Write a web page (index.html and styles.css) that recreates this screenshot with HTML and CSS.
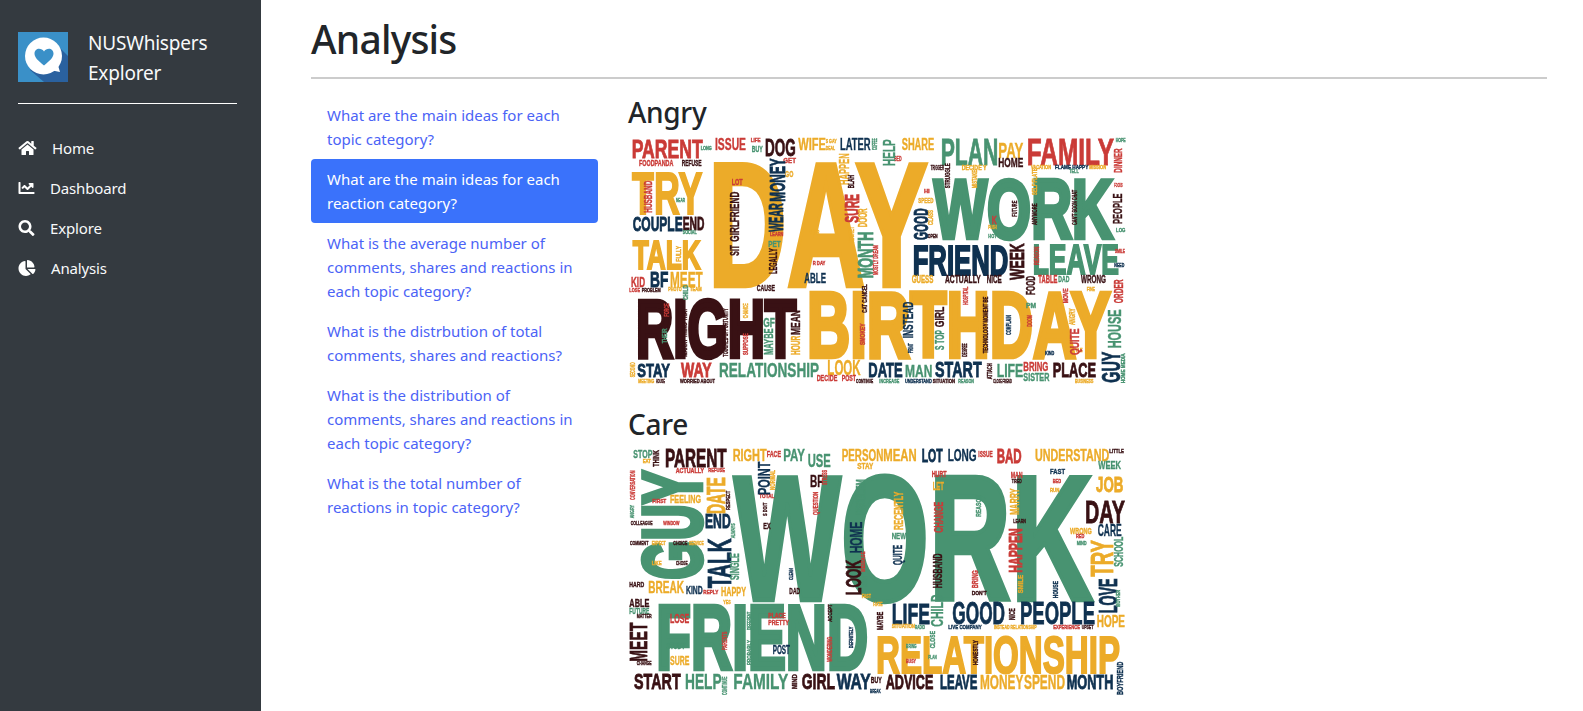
FILE: index.html
```html
<!DOCTYPE html>
<html lang="en">
<head>
<meta charset="utf-8">
<title>NUSWhispers Explorer</title>
<link rel="stylesheet" href="styles.css">
</head>
<body>
<div class="app">
<aside class="sidebar">
  <div class="brand">
    <svg class="logo" viewBox="0 0 50 50">
      <rect width="50" height="50" fill="#3a90c8"/>
      <path d="M12 38L26 50H50V24L38 12z" fill="#2a619f"/>
      <circle cx="25.500" cy="24" r="18.500" fill="#fff"/>
      <path d="M32 38L42 40L39 30z" fill="#fff"/>
      <path d="M26 33.500C20 28.500 16.500 25.500 16.500 21.500C16.500 18.500 18.800 16.800 21 16.800C23 16.800 25 17.800 26 19.600C27 17.800 29 16.800 31 16.800C33.200 16.800 35.500 18.500 35.500 21.500C35.500 25.500 32 28.500 26 33.500z" fill="#3a90c8"/>
    </svg>
    <div class="brand-name">NUSWhispers Explorer</div>
  </div>
  <nav class="side-nav">
    <a class="side-link"><svg class="ico ico-home" viewBox="0 0 576 512"><path d="M280.37 148.26L96 300.11V464a16 16 0 0 0 16 16l112.06-.29a16 16 0 0 0 15.92-16V368a16 16 0 0 1 16-16h64a16 16 0 0 1 16 16v95.64a16 16 0 0 0 16 16.05L464 480a16 16 0 0 0 16-16V300L295.67 148.26a12.19 12.19 0 0 0-15.3 0zM571.6 251.47L488 182.56V44.05a12 12 0 0 0-12-12h-56a12 12 0 0 0-12 12v72.61L318.47 43a48 48 0 0 0-61 0L4.34 251.47a12 12 0 0 0-1.6 16.9l25.5 31A12 12 0 0 0 45.15 301l235.22-193.74a12.19 12.19 0 0 1 15.3 0L530.9 301a12 12 0 0 0 16.9-1.6l25.5-31a12 12 0 0 0-1.7-16.93z"/></svg>Home</a>
    <a class="side-link"><svg class="ico" viewBox="0 0 512 512"><path d="M496 384H64V80c0-8.840-7.160-16-16-16H16C7.160 64 0 71.160 0 80v336c0 17.670 14.330 32 32 32h464c8.840 0 16-7.160 16-16v-32c0-8.840-7.160-16-16-16zM464 96H345.940c-21.380 0-32.090 25.850-16.970 40.970l32.400 32.400L288 242.750l-73.370-73.370c-12.500-12.500-32.760-12.500-45.250 0l-68.690 68.690c-6.250 6.250-6.250 16.380 0 22.630l22.620 22.620c6.250 6.250 16.380 6.250 22.630 0L192 237.250l73.370 73.370c12.500 12.500 32.760 12.500 45.250 0l96-96 32.400 32.400c15.120 15.120 40.970 4.410 40.970-16.970V112c0-8.840-7.160-16-16-16z"/></svg>Dashboard</a>
    <a class="side-link"><svg class="ico" viewBox="0 0 512 512"><path d="M505 442.700L405.300 343c-4.500-4.500-10.600-7-17-7H372c27.600-35.300 44-79.700 44-128C416 93.100 322.900 0 208 0S0 93.100 0 208s93.100 208 208 208c48.300 0 92.700-16.400 128-44v16.300c0 6.400 2.500 12.500 7 17l99.700 99.700c9.400 9.400 24.600 9.400 33.900 0l28.300-28.300c9.400-9.400 9.400-24.600.1-34zM208 336c-70.700 0-128-57.200-128-128 0-70.700 57.200-128 128-128 70.700 0 128 57.200 128 128 0 70.700-57.200 128-128 128z"/></svg>Explore</a>
    <a class="side-link"><svg class="ico ico-pie" viewBox="0 0 544 512"><path d="M527.790 288H290.500l158.030 158.030c6.040 6.040 15.980 6.530 22.190.68 38.700-36.460 65.320-85.610 73.130-140.860 1.340-9.460-6.510-17.850-16.060-17.850zm-15.830-64.800C503.720 103.740 408.260 8.280 288.800.04 279.680-.59 272 7.100 272 16.240V240h223.770c9.140 0 16.820-7.680 16.190-16.800zM224 288V50.710c0-9.550-8.390-17.400-17.840-16.060C86.990 51.490-4.100 155.600.14 280.370 4.500 408.510 114.830 513.590 243.030 511.980c50.400-.63 96.970-16.870 135.260-44.030 7.900-5.600 8.420-17.230 1.570-24.080L224 288z"/></svg>Analysis</a>
  </nav>
</aside>
<main class="main">
  <h1 class="title">Analysis</h1>
  <div class="columns">
    <nav class="pills">
      <a class="pill">What are the main ideas for each topic category?</a>
      <a class="pill active">What are the main ideas for each reaction category?</a>
      <a class="pill">What is the average number of comments, shares and reactions in each topic category?</a>
      <a class="pill">What is the distrbution of total comments, shares and reactions?</a>
      <a class="pill">What is the distribution of comments, shares and reactions in each topic category?</a>
      <a class="pill">What is the total number of reactions in topic category?</a>
    </nav>
    <section class="clouds">
      <h3 class="cloud-title">Angry</h3>
      <svg class="cloud" viewBox="24 135 1500 750">
        <text class="y t1" x="264" y="589" font-size="530" textLength="660" lengthAdjust="spacingAndGlyphs">DAY</text>
        <text class="g t1" x="941" y="444" font-size="252" textLength="538" lengthAdjust="spacingAndGlyphs">WORK</text>
        <text class="y t1" x="561" y="802" font-size="277" textLength="911" lengthAdjust="spacingAndGlyphs">BIRTHDAY</text>
        <text class="m t1" x="48" y="802" font-size="245" textLength="481" lengthAdjust="spacingAndGlyphs">RIGHT</text>
        <text class="y t2" x="36" y="372" font-size="176" textLength="211" lengthAdjust="spacingAndGlyphs">TRY</text>
        <text class="y t2" x="38" y="537" font-size="122" textLength="204" lengthAdjust="spacingAndGlyphs">TALK</text>
        <text class="n t2" x="878" y="555" font-size="128" textLength="287" lengthAdjust="spacingAndGlyphs">FRIEND</text>
        <text class="g t2" x="1238" y="552" font-size="129" textLength="259" lengthAdjust="spacingAndGlyphs">LEAVE</text>
        <text class="r t3" x="35" y="205" font-size="78" textLength="213" lengthAdjust="spacingAndGlyphs">PARENT</text>
        <text class="r" x="285" y="180" font-size="52" textLength="93" lengthAdjust="spacingAndGlyphs">ISSUE</text>
        <text class="m t3" x="435" y="197" font-size="73" textLength="92" lengthAdjust="spacingAndGlyphs">DOG</text>
        <text class="y" x="535" y="180" font-size="52" textLength="83" lengthAdjust="spacingAndGlyphs">WIFE</text>
        <text class="n" x="660" y="180" font-size="52" textLength="92" lengthAdjust="spacingAndGlyphs">LATER</text>
        <text class="y" x="845" y="180" font-size="52" textLength="98" lengthAdjust="spacingAndGlyphs">SHARE</text>
        <text class="g t3" x="962" y="225" font-size="112" textLength="173" lengthAdjust="spacingAndGlyphs">PLAN</text>
        <text class="y" x="1135" y="205" font-size="68" textLength="75" lengthAdjust="spacingAndGlyphs">PAY</text>
        <text class="r t3" x="1220" y="225" font-size="112" textLength="262" lengthAdjust="spacingAndGlyphs">FAMILY</text>
        <text class="m" x="1135" y="232" font-size="39" textLength="75" lengthAdjust="spacingAndGlyphs">HOME</text>
        <text class="n t3" x="38" y="423" font-size="59" textLength="150" lengthAdjust="spacingAndGlyphs">COUPLE</text>
        <text class="m t3" x="188" y="420" font-size="55" textLength="65" lengthAdjust="spacingAndGlyphs">END</text>
        <text class="n t3" x="90" y="592" font-size="64" textLength="55" lengthAdjust="spacingAndGlyphs">BF</text>
        <text class="y" x="150" y="592" font-size="64" textLength="98" lengthAdjust="spacingAndGlyphs">MEET</text>
        <text class="r" x="33" y="592" font-size="44" textLength="42" lengthAdjust="spacingAndGlyphs">KID</text>
        <text class="n" x="553" y="578" font-size="45" textLength="65" lengthAdjust="spacingAndGlyphs">ABLE</text>
        <text class="g" x="445" y="472" font-size="27" textLength="37" lengthAdjust="spacingAndGlyphs">PET</text>
        <text class="m" x="410" y="603" font-size="25" textLength="55" lengthAdjust="spacingAndGlyphs">CAUSE</text>
        <text class="r" x="335" y="285" font-size="27" textLength="33" lengthAdjust="spacingAndGlyphs">LOT</text>
        <text class="y" x="875" y="580" font-size="30" textLength="65" lengthAdjust="spacingAndGlyphs">GUESS</text>
        <text class="m" x="975" y="580" font-size="30" textLength="107" lengthAdjust="spacingAndGlyphs">ACTUALLY</text>
        <text class="m" x="1100" y="580" font-size="30" textLength="45" lengthAdjust="spacingAndGlyphs">NICE</text>
        <text class="r" x="1255" y="580" font-size="30" textLength="57" lengthAdjust="spacingAndGlyphs">TABLE</text>
        <text class="g" x="1315" y="576" font-size="25" textLength="33" lengthAdjust="spacingAndGlyphs">DAD</text>
        <text class="m" x="1383" y="580" font-size="30" textLength="75" lengthAdjust="spacingAndGlyphs">WRONG</text>
        <text class="n t3" x="52" y="860" font-size="57" textLength="98" lengthAdjust="spacingAndGlyphs">STAY</text>
        <text class="r t3" x="183" y="860" font-size="61" textLength="92" lengthAdjust="spacingAndGlyphs">WAY</text>
        <text class="g" x="297" y="862" font-size="60" textLength="300" lengthAdjust="spacingAndGlyphs">RELATIONSHIP</text>
        <text class="y" x="622" y="855" font-size="68" textLength="100" lengthAdjust="spacingAndGlyphs">LOOK</text>
        <text class="n t3" x="745" y="860" font-size="61" textLength="103" lengthAdjust="spacingAndGlyphs">DATE</text>
        <text class="g" x="855" y="860" font-size="52" textLength="82" lengthAdjust="spacingAndGlyphs">MAN</text>
        <text class="n t3" x="945" y="860" font-size="65" textLength="140" lengthAdjust="spacingAndGlyphs">START</text>
        <text class="g" x="1130" y="860" font-size="57" textLength="80" lengthAdjust="spacingAndGlyphs">LIFE</text>
        <text class="r" x="1210" y="842" font-size="37" textLength="75" lengthAdjust="spacingAndGlyphs">BRING</text>
        <text class="g" x="1210" y="872" font-size="33" textLength="78" lengthAdjust="spacingAndGlyphs">SISTER</text>
        <text class="m t3" x="1298" y="860" font-size="61" textLength="130" lengthAdjust="spacingAndGlyphs">PLACE</text>
        <text class="r" x="590" y="873" font-size="25" textLength="62" lengthAdjust="spacingAndGlyphs">DECIDE</text>
        <text class="r" x="665" y="873" font-size="25" textLength="43" lengthAdjust="spacingAndGlyphs">POST</text>
        <text class="r" x="57" y="228" font-size="25" textLength="103" lengthAdjust="spacingAndGlyphs">FOODPANDA</text>
        <text class="m" x="185" y="228" font-size="25" textLength="60" lengthAdjust="spacingAndGlyphs">REFUSE</text>
        <text class="g" x="395" y="187" font-size="27" textLength="33" lengthAdjust="spacingAndGlyphs">BUY</text>
        <text class="r" x="392" y="155" font-size="17" textLength="30" lengthAdjust="spacingAndGlyphs">LIFE</text>
        <text class="y" x="617" y="158" font-size="18" textLength="33" lengthAdjust="spacingAndGlyphs">S GAY</text>
        <text class="y" x="617" y="180" font-size="17" textLength="28" lengthAdjust="spacingAndGlyphs">DEAL</text>
        <text class="r" x="822" y="212" font-size="20" textLength="23" lengthAdjust="spacingAndGlyphs">BED</text>
        <text class="g" x="1487" y="155" font-size="17" textLength="30" lengthAdjust="spacingAndGlyphs">HOPE</text>
        <text class="g" x="242" y="180" font-size="14" textLength="33" lengthAdjust="spacingAndGlyphs">LONG</text>
        <text class="g" x="168" y="335" font-size="17" textLength="27" lengthAdjust="spacingAndGlyphs">NEAR</text>
        <text class="g" x="188" y="432" font-size="17" textLength="42" lengthAdjust="spacingAndGlyphs">SOCIAL</text>
        <text class="r" x="490" y="220" font-size="21" textLength="38" lengthAdjust="spacingAndGlyphs">GET</text>
        <text class="y" x="495" y="260" font-size="27" textLength="25" lengthAdjust="spacingAndGlyphs">GO</text>
        <text class="r" x="28" y="605" font-size="18" textLength="32" lengthAdjust="spacingAndGlyphs">LOSE</text>
        <text class="m" x="65" y="605" font-size="18" textLength="57" lengthAdjust="spacingAndGlyphs">PROBLEM</text>
        <text class="y" x="145" y="603" font-size="17" textLength="40" lengthAdjust="spacingAndGlyphs">PHOTO</text>
        <text class="y" x="210" y="603" font-size="17" textLength="35" lengthAdjust="spacingAndGlyphs">TEAM</text>
        <text class="y" x="1400" y="603" font-size="18" textLength="25" lengthAdjust="spacingAndGlyphs">FINE</text>
        <text class="g" x="430" y="710" font-size="37" textLength="35" lengthAdjust="spacingAndGlyphs">GF</text>
        <text class="y" x="55" y="878" font-size="17" textLength="48" lengthAdjust="spacingAndGlyphs">MEETING</text>
        <text class="m" x="108" y="878" font-size="17" textLength="27" lengthAdjust="spacingAndGlyphs">HOUSE</text>
        <text class="m" x="180" y="878" font-size="17" textLength="105" lengthAdjust="spacingAndGlyphs">WORRIED ABOUT</text>
        <text class="m" x="708" y="878" font-size="17" textLength="52" lengthAdjust="spacingAndGlyphs">CONTINUE</text>
        <text class="g" x="778" y="878" font-size="17" textLength="60" lengthAdjust="spacingAndGlyphs">INCREASE</text>
        <text class="n" x="855" y="878" font-size="17" textLength="80" lengthAdjust="spacingAndGlyphs">UNDERSTAND</text>
        <text class="m" x="938" y="878" font-size="17" textLength="67" lengthAdjust="spacingAndGlyphs">SITUATION</text>
        <text class="g" x="1015" y="878" font-size="17" textLength="47" lengthAdjust="spacingAndGlyphs">REASON</text>
        <text class="m" x="1120" y="878" font-size="17" textLength="55" lengthAdjust="spacingAndGlyphs">CLOSE FRIEND</text>
        <text class="y" x="1365" y="878" font-size="17" textLength="55" lengthAdjust="spacingAndGlyphs">BUSINESS</text>
        <text class="m" x="932" y="240" font-size="20" textLength="40" lengthAdjust="spacingAndGlyphs">TRIGGER</text>
        <text class="y" x="1025" y="240" font-size="20" textLength="75" lengthAdjust="spacingAndGlyphs">DECIDE Y</text>
        <text class="y" x="1233" y="238" font-size="17" textLength="60" lengthAdjust="spacingAndGlyphs">VACATION</text>
        <text class="n" x="1305" y="238" font-size="17" textLength="100" lengthAdjust="spacingAndGlyphs">FLAME HAPPY</text>
        <text class="y" x="1408" y="238" font-size="17" textLength="50" lengthAdjust="spacingAndGlyphs">MISSION</text>
        <text class="y" x="895" y="340" font-size="20" textLength="45" lengthAdjust="spacingAndGlyphs">SPEED</text>
        <text class="r" x="912" y="308" font-size="17" textLength="17" lengthAdjust="spacingAndGlyphs">HI</text>
        <text class="m" x="923" y="443" font-size="17" textLength="30" lengthAdjust="spacingAndGlyphs">OPEN</text>
        <text class="r" x="1115" y="403" font-size="33" textLength="15" lengthAdjust="spacingAndGlyphs">K</text>
        <text class="y" x="1105" y="418" font-size="17" textLength="25" lengthAdjust="spacingAndGlyphs">PUSH</text>
        <text class="g" x="1105" y="443" font-size="17" textLength="25" lengthAdjust="spacingAndGlyphs">HOT</text>
        <text class="y" x="568" y="432" font-size="17" textLength="30" lengthAdjust="spacingAndGlyphs">YEAR</text>
        <text class="r" x="578" y="526" font-size="17" textLength="38" lengthAdjust="spacingAndGlyphs">R DAY</text>
        <text class="r" x="450" y="438" font-size="17" textLength="40" lengthAdjust="spacingAndGlyphs">LEARN</text>
        <text class="g" x="1218" y="655" font-size="21" textLength="30" lengthAdjust="spacingAndGlyphs">PM</text>
        <text class="y" x="1350" y="785" font-size="17" textLength="38" lengthAdjust="spacingAndGlyphs">STYLE</text>
        <text class="n" x="1275" y="795" font-size="17" textLength="28" lengthAdjust="spacingAndGlyphs">KIND</text>
        <text class="r" x="1485" y="490" font-size="17" textLength="30" lengthAdjust="spacingAndGlyphs">SMILE</text>
        <text class="n" x="1483" y="530" font-size="17" textLength="30" lengthAdjust="spacingAndGlyphs">NEED</text>
        <text class="r" x="1483" y="290" font-size="17" textLength="25" lengthAdjust="spacingAndGlyphs">FOCUS</text>
        <text class="g" x="1348" y="250" font-size="17" textLength="28" lengthAdjust="spacingAndGlyphs">TELL</text>
        <text class="g" x="1488" y="425" font-size="17" textLength="28" lengthAdjust="spacingAndGlyphs">LOG</text>
        <text class="g" x="825" y="228" transform="rotate(-90 825 228)" font-size="52" textLength="80" lengthAdjust="spacingAndGlyphs">HELP</text>
        <text class="r" x="1505" y="248" transform="rotate(-90 1505 248)" font-size="30" textLength="73" lengthAdjust="spacingAndGlyphs">DINNER</text>
        <text class="r" x="95" y="368" transform="rotate(-90 95 368)" font-size="31" textLength="96" lengthAdjust="spacingAndGlyphs">HUSBAND</text>
        <text class="m" x="358" y="455" transform="rotate(-90 358 455)" font-size="38" textLength="150" lengthAdjust="spacingAndGlyphs">GIRLFRIEND</text>
        <text class="m" x="358" y="497" transform="rotate(-90 358 497)" font-size="38" textLength="32" lengthAdjust="spacingAndGlyphs">SIT</text>
        <text class="n t3" x="490" y="425" transform="rotate(-90 490 425)" font-size="59" textLength="85" lengthAdjust="spacingAndGlyphs">WEAR</text>
        <text class="n t3" x="495" y="335" transform="rotate(-90 495 335)" font-size="65" textLength="130" lengthAdjust="spacingAndGlyphs">MONEY</text>
        <text class="y" x="688" y="285" transform="rotate(-90 688 285)" font-size="45" textLength="95" lengthAdjust="spacingAndGlyphs">HAPPEN</text>
        <text class="m" x="703" y="295" transform="rotate(-90 703 295)" font-size="27" textLength="40" lengthAdjust="spacingAndGlyphs">BLAH</text>
        <text class="r t3" x="718" y="398" transform="rotate(-90 718 398)" font-size="59" textLength="86" lengthAdjust="spacingAndGlyphs">SURE</text>
        <text class="y" x="742" y="412" transform="rotate(-90 742 412)" font-size="41" textLength="57" lengthAdjust="spacingAndGlyphs">DOOR</text>
        <text class="g t3" x="760" y="565" transform="rotate(-90 760 565)" font-size="65" textLength="140" lengthAdjust="spacingAndGlyphs">MONTH</text>
        <text class="m t3" x="1213" y="570" transform="rotate(-90 1213 570)" font-size="59" textLength="110" lengthAdjust="spacingAndGlyphs">WEEK</text>
        <text class="n t3" x="925" y="450" transform="rotate(-90 925 450)" font-size="59" textLength="95" lengthAdjust="spacingAndGlyphs">GOOD</text>
        <text class="m" x="1245" y="615" transform="rotate(-90 1245 615)" font-size="41" textLength="57" lengthAdjust="spacingAndGlyphs">FOOD</text>
        <text class="r" x="1510" y="640" transform="rotate(-90 1510 640)" font-size="37" textLength="72" lengthAdjust="spacingAndGlyphs">ORDER</text>
        <text class="m" x="1505" y="402" transform="rotate(-90 1505 402)" font-size="41" textLength="92" lengthAdjust="spacingAndGlyphs">PEOPLE</text>
        <text class="g" x="1503" y="775" transform="rotate(-90 1503 775)" font-size="56" textLength="117" lengthAdjust="spacingAndGlyphs">HOUSE</text>
        <text class="n t3" x="1500" y="878" transform="rotate(-90 1500 878)" font-size="79" textLength="93" lengthAdjust="spacingAndGlyphs">GUY</text>
        <text class="r" x="1378" y="795" transform="rotate(-90 1378 795)" font-size="38" textLength="80" lengthAdjust="spacingAndGlyphs">QUITE</text>
        <text class="y" x="1365" y="705" transform="rotate(-90 1365 705)" font-size="27" textLength="50" lengthAdjust="spacingAndGlyphs">ANGRY</text>
        <text class="n" x="880" y="745" transform="rotate(-90 880 745)" font-size="44" textLength="110" lengthAdjust="spacingAndGlyphs">INSTEAD</text>
        <text class="m" x="972" y="712" transform="rotate(-90 972 712)" font-size="41" textLength="62" lengthAdjust="spacingAndGlyphs">GIRL</text>
        <text class="g" x="972" y="780" transform="rotate(-90 972 780)" font-size="41" textLength="60" lengthAdjust="spacingAndGlyphs">S TOP</text>
        <text class="m" x="540" y="735" transform="rotate(-90 540 735)" font-size="41" textLength="75" lengthAdjust="spacingAndGlyphs">MEAN</text>
        <text class="y" x="540" y="795" transform="rotate(-90 540 795)" font-size="38" textLength="58" lengthAdjust="spacingAndGlyphs">HOUR</text>
        <text class="g" x="458" y="795" transform="rotate(-90 458 795)" font-size="38" textLength="80" lengthAdjust="spacingAndGlyphs">MAYBE</text>
        <text class="m" x="470" y="552" transform="rotate(-90 470 552)" font-size="30" textLength="77" lengthAdjust="spacingAndGlyphs">LEGALLY</text>
        <text class="y" x="183" y="515" transform="rotate(-90 183 515)" font-size="21" textLength="47" lengthAdjust="spacingAndGlyphs">FULLY</text>
        <text class="y" x="1250" y="315" transform="rotate(-90 1250 315)" font-size="21" textLength="80" lengthAdjust="spacingAndGlyphs">SELF FLATE</text>
        <text class="m" x="1370" y="405" transform="rotate(-90 1370 405)" font-size="21" textLength="105" lengthAdjust="spacingAndGlyphs">CAN'T SOON CHAT</text>
        <text class="m" x="1250" y="405" transform="rotate(-90 1250 405)" font-size="21" textLength="65" lengthAdjust="spacingAndGlyphs">ANYMORE</text>
        <text class="m" x="1190" y="380" transform="rotate(-90 1190 380)" font-size="21" textLength="48" lengthAdjust="spacingAndGlyphs">FUTURE</text>
        <text class="m" x="990" y="295" transform="rotate(-90 990 295)" font-size="21" textLength="75" lengthAdjust="spacingAndGlyphs">STRUGGLE</text>
        <text class="y" x="1070" y="295" transform="rotate(-90 1070 295)" font-size="21" textLength="55" lengthAdjust="spacingAndGlyphs">MISTAKE</text>
        <text class="y" x="940" y="405" transform="rotate(-90 940 405)" font-size="21" textLength="45" lengthAdjust="spacingAndGlyphs">CLASS</text>
        <text class="r" x="1258" y="525" transform="rotate(-90 1258 525)" font-size="21" textLength="55" lengthAdjust="spacingAndGlyphs">REASON</text>
        <text class="r" x="775" y="555" transform="rotate(-90 775 555)" font-size="21" textLength="90" lengthAdjust="spacingAndGlyphs">MOSTLY DREAM</text>
        <text class="y" x="703" y="460" transform="rotate(-90 703 460)" font-size="21" textLength="50" lengthAdjust="spacingAndGlyphs">REGRET</text>
        <text class="g" x="205" y="630" transform="rotate(-90 205 630)" font-size="21" textLength="45" lengthAdjust="spacingAndGlyphs">CHILD</text>
        <text class="r" x="148" y="680" transform="rotate(-90 148 680)" font-size="21" textLength="40" lengthAdjust="spacingAndGlyphs">FORCE</text>
        <text class="g" x="140" y="760" transform="rotate(-90 140 760)" font-size="21" textLength="45" lengthAdjust="spacingAndGlyphs">THEIR</text>
        <text class="m" x="200" y="800" transform="rotate(-90 200 800)" font-size="21" textLength="145" lengthAdjust="spacingAndGlyphs">MARRY THING THAT</text>
        <text class="m" x="325" y="800" transform="rotate(-90 325 800)" font-size="21" textLength="145" lengthAdjust="spacingAndGlyphs">TOUCHED OPPORTUNITY</text>
        <text class="y" x="385" y="685" transform="rotate(-90 385 685)" font-size="21" textLength="45" lengthAdjust="spacingAndGlyphs">CHANCE</text>
        <text class="r" x="385" y="795" transform="rotate(-90 385 795)" font-size="21" textLength="65" lengthAdjust="spacingAndGlyphs">SUPPOSE</text>
        <text class="y" x="672" y="690" transform="rotate(-90 672 690)" font-size="21" textLength="55" lengthAdjust="spacingAndGlyphs">THOUGH</text>
        <text class="y" x="672" y="775" transform="rotate(-90 672 775)" font-size="21" textLength="50" lengthAdjust="spacingAndGlyphs">SUPPORT</text>
        <text class="m" x="740" y="668" transform="rotate(-90 740 668)" font-size="21" textLength="85" lengthAdjust="spacingAndGlyphs">CAT CANCEL</text>
        <text class="r" x="735" y="765" transform="rotate(-90 735 765)" font-size="21" textLength="65" lengthAdjust="spacingAndGlyphs">SMOKEY</text>
        <text class="r" x="1043" y="645" transform="rotate(-90 1043 645)" font-size="21" textLength="55" lengthAdjust="spacingAndGlyphs">HOSPITAL</text>
        <text class="m" x="1105" y="790" transform="rotate(-90 1105 790)" font-size="21" textLength="170" lengthAdjust="spacingAndGlyphs">TECHNOLOGY MOMENT BE</text>
        <text class="n" x="1172" y="735" transform="rotate(-90 1172 735)" font-size="21" textLength="60" lengthAdjust="spacingAndGlyphs">COMPLAIN</text>
        <text class="r" x="1235" y="710" transform="rotate(-90 1235 710)" font-size="21" textLength="35" lengthAdjust="spacingAndGlyphs">DOOM</text>
        <text class="r" x="1345" y="640" transform="rotate(-90 1345 640)" font-size="21" textLength="45" lengthAdjust="spacingAndGlyphs">MOVE</text>
        <text class="m" x="1040" y="800" transform="rotate(-90 1040 800)" font-size="21" textLength="40" lengthAdjust="spacingAndGlyphs">DEGREE</text>
        <text class="n" x="880" y="790" transform="rotate(-90 880 790)" font-size="21" textLength="30" lengthAdjust="spacingAndGlyphs">PRINT</text>
        <text class="m" x="1115" y="868" transform="rotate(-90 1115 868)" font-size="21" textLength="48" lengthAdjust="spacingAndGlyphs">ATTACH</text>
        <text class="y" x="45" y="862" transform="rotate(-90 45 862)" font-size="21" textLength="45" lengthAdjust="spacingAndGlyphs">SECOND</text>
        <text class="g" x="1515" y="880" transform="rotate(-90 1515 880)" font-size="17" textLength="90" lengthAdjust="spacingAndGlyphs">HOME MEDIA</text>
        <text class="g" x="772" y="180" transform="rotate(-90 772 180)" font-size="21" textLength="35" lengthAdjust="spacingAndGlyphs">COFFEE</text>
      </svg>
      <h3 class="cloud-title next">Care</h3>
      <svg class="cloud" viewBox="24 135 1500 750">
        <text class="g t1" x="341" y="599" font-size="532" textLength="1078" lengthAdjust="spacingAndGlyphs">WORK</text>
        <text class="g t1" x="109" y="806" font-size="272" textLength="635" lengthAdjust="spacingAndGlyphs">FRIEND</text>
        <text class="y t2" x="768" y="819" font-size="158" textLength="732" lengthAdjust="spacingAndGlyphs">RELATIONSHIP</text>
        <text class="g t1" x="244" y="539" transform="rotate(-90 244 539)" font-size="252" textLength="328" lengthAdjust="spacingAndGlyphs">GUY</text>
        <text class="g" x="40" y="175" font-size="34" textLength="57" lengthAdjust="spacingAndGlyphs">STOP</text>
        <text class="m t3" x="135" y="200" font-size="75" textLength="185" lengthAdjust="spacingAndGlyphs">PARENT</text>
        <text class="r" x="167" y="218" font-size="21" textLength="85" lengthAdjust="spacingAndGlyphs">ACTUALLY</text>
        <text class="r" x="265" y="215" font-size="17" textLength="50" lengthAdjust="spacingAndGlyphs">REFUSE</text>
        <text class="y" x="338" y="183" font-size="52" textLength="102" lengthAdjust="spacingAndGlyphs">RIGHT</text>
        <text class="r" x="440" y="172" font-size="26" textLength="43" lengthAdjust="spacingAndGlyphs">FACE</text>
        <text class="g" x="490" y="183" font-size="52" textLength="65" lengthAdjust="spacingAndGlyphs">PAY</text>
        <text class="g" x="563" y="200" font-size="55" textLength="69" lengthAdjust="spacingAndGlyphs">USE</text>
        <text class="y" x="665" y="183" font-size="52" textLength="125" lengthAdjust="spacingAndGlyphs">PERSON</text>
        <text class="y" x="790" y="183" font-size="52" textLength="100" lengthAdjust="spacingAndGlyphs">MEAN</text>
        <text class="n t3" x="905" y="185" font-size="55" textLength="63" lengthAdjust="spacingAndGlyphs">LOT</text>
        <text class="n" x="983" y="183" font-size="52" textLength="87" lengthAdjust="spacingAndGlyphs">LONG</text>
        <text class="r" x="1075" y="172" font-size="26" textLength="43" lengthAdjust="spacingAndGlyphs">ISSUE</text>
        <text class="r t3" x="1130" y="190" font-size="61" textLength="75" lengthAdjust="spacingAndGlyphs">BAD</text>
        <text class="y" x="1245" y="183" font-size="52" textLength="223" lengthAdjust="spacingAndGlyphs">UNDERSTAND</text>
        <text class="m" x="1468" y="158" font-size="18" textLength="44" lengthAdjust="spacingAndGlyphs">LITTLE</text>
        <text class="g" x="1435" y="208" font-size="34" textLength="68" lengthAdjust="spacingAndGlyphs">WEEK</text>
        <text class="y t3" x="1428" y="275" font-size="68" textLength="82" lengthAdjust="spacingAndGlyphs">JOB</text>
        <text class="m t3" x="1395" y="370" font-size="96" textLength="120" lengthAdjust="spacingAndGlyphs">DAY</text>
        <text class="n" x="1433" y="408" font-size="49" textLength="72" lengthAdjust="spacingAndGlyphs">CARE</text>
        <text class="y" x="1350" y="403" font-size="25" textLength="65" lengthAdjust="spacingAndGlyphs">WRONG</text>
        <text class="n" x="1290" y="222" font-size="24" textLength="45" lengthAdjust="spacingAndGlyphs">FAST</text>
        <text class="r" x="935" y="230" font-size="25" textLength="45" lengthAdjust="spacingAndGlyphs">HURT</text>
        <text class="r" x="1172" y="235" font-size="27" textLength="36" lengthAdjust="spacingAndGlyphs">MAN</text>
        <text class="m" x="1175" y="248" font-size="18" textLength="30" lengthAdjust="spacingAndGlyphs">TIRED</text>
        <text class="y" x="712" y="208" font-size="25" textLength="48" lengthAdjust="spacingAndGlyphs">STAY</text>
        <text class="m" x="570" y="262" font-size="51" textLength="40" lengthAdjust="spacingAndGlyphs">BF</text>
        <text class="y" x="150" y="310" font-size="34" textLength="93" lengthAdjust="spacingAndGlyphs">FEELING</text>
        <text class="n t3" x="255" y="385" font-size="59" textLength="77" lengthAdjust="spacingAndGlyphs">END</text>
        <text class="y" x="938" y="270" font-size="34" textLength="34" lengthAdjust="spacingAndGlyphs">LET</text>
        <text class="g" x="815" y="418" font-size="27" textLength="43" lengthAdjust="spacingAndGlyphs">NEW</text>
        <text class="n" x="198" y="583" font-size="34" textLength="50" lengthAdjust="spacingAndGlyphs">KIND</text>
        <text class="r" x="250" y="582" font-size="17" textLength="45" lengthAdjust="spacingAndGlyphs">REPLY</text>
        <text class="y" x="303" y="588" font-size="38" textLength="75" lengthAdjust="spacingAndGlyphs">HAPPY</text>
        <text class="y" x="85" y="580" font-size="51" textLength="107" lengthAdjust="spacingAndGlyphs">BREAK</text>
        <text class="m" x="28" y="560" font-size="24" textLength="45" lengthAdjust="spacingAndGlyphs">HARD</text>
        <text class="m" x="28" y="620" font-size="31" textLength="60" lengthAdjust="spacingAndGlyphs">ABLE</text>
        <text class="g" x="28" y="643" font-size="25" textLength="60" lengthAdjust="spacingAndGlyphs">FUTURE</text>
        <text class="r" x="150" y="670" font-size="37" textLength="58" lengthAdjust="spacingAndGlyphs">LOSE</text>
        <text class="g" x="140" y="748" font-size="25" textLength="55" lengthAdjust="spacingAndGlyphs">STUDY</text>
        <text class="y" x="150" y="795" font-size="38" textLength="58" lengthAdjust="spacingAndGlyphs">SURE</text>
        <text class="m t3" x="42" y="868" font-size="68" textLength="140" lengthAdjust="spacingAndGlyphs">START</text>
        <text class="g" x="195" y="868" font-size="68" textLength="110" lengthAdjust="spacingAndGlyphs">HELP</text>
        <text class="g" x="340" y="868" font-size="68" textLength="165" lengthAdjust="spacingAndGlyphs">FAMILY</text>
        <text class="m t3" x="545" y="868" font-size="68" textLength="100" lengthAdjust="spacingAndGlyphs">GIRL</text>
        <text class="n t3" x="650" y="868" font-size="68" textLength="102" lengthAdjust="spacingAndGlyphs">WAY</text>
        <text class="m t3" x="797" y="868" font-size="59" textLength="143" lengthAdjust="spacingAndGlyphs">ADVICE</text>
        <text class="n t3" x="960" y="868" font-size="59" textLength="112" lengthAdjust="spacingAndGlyphs">LEAVE</text>
        <text class="y" x="1080" y="868" font-size="59" textLength="130" lengthAdjust="spacingAndGlyphs">MONEY</text>
        <text class="y" x="1212" y="868" font-size="59" textLength="123" lengthAdjust="spacingAndGlyphs">SPEND</text>
        <text class="n t3" x="1340" y="868" font-size="59" textLength="140" lengthAdjust="spacingAndGlyphs">MONTH</text>
        <text class="n t3" x="815" y="673" font-size="89" textLength="115" lengthAdjust="spacingAndGlyphs">LIFE</text>
        <text class="n t3" x="997" y="672" font-size="92" textLength="158" lengthAdjust="spacingAndGlyphs">GOOD</text>
        <text class="n t3" x="1200" y="672" font-size="94" textLength="225" lengthAdjust="spacingAndGlyphs">PEOPLE</text>
        <text class="y" x="1430" y="680" font-size="51" textLength="85" lengthAdjust="spacingAndGlyphs">HOPE</text>
        <text class="n" x="458" y="762" font-size="38" textLength="52" lengthAdjust="spacingAndGlyphs">POST</text>
        <text class="r" x="445" y="655" font-size="20" textLength="52" lengthAdjust="spacingAndGlyphs">PLACE</text>
        <text class="r" x="445" y="675" font-size="22" textLength="62" lengthAdjust="spacingAndGlyphs">PRETTY</text>
        <text class="m" x="508" y="583" font-size="25" textLength="32" lengthAdjust="spacingAndGlyphs">DAD</text>
        <text class="m" x="430" y="388" font-size="25" textLength="22" lengthAdjust="spacingAndGlyphs">EX</text>
        <text class="m" x="752" y="850" font-size="25" textLength="33" lengthAdjust="spacingAndGlyphs">BUY</text>
        <text class="m" x="32" y="375" font-size="18" textLength="66" lengthAdjust="spacingAndGlyphs">COLLEAGUE</text>
        <text class="r" x="130" y="375" font-size="18" textLength="48" lengthAdjust="spacingAndGlyphs">WINDOW</text>
        <text class="m" x="30" y="436" font-size="18" textLength="55" lengthAdjust="spacingAndGlyphs">COMMENT</text>
        <text class="y" x="95" y="436" font-size="18" textLength="42" lengthAdjust="spacingAndGlyphs">EXPECT</text>
        <text class="m" x="160" y="436" font-size="18" textLength="42" lengthAdjust="spacingAndGlyphs">CHOICE</text>
        <text class="y" x="207" y="436" font-size="18" textLength="44" lengthAdjust="spacingAndGlyphs">SERVICE</text>
        <text class="r" x="97" y="310" font-size="18" textLength="42" lengthAdjust="spacingAndGlyphs">FIRST</text>
        <text class="y" x="95" y="495" font-size="18" textLength="30" lengthAdjust="spacingAndGlyphs">LIKE</text>
        <text class="m" x="168" y="495" font-size="18" textLength="35" lengthAdjust="spacingAndGlyphs">CHOSE</text>
        <text class="y" x="68" y="188" font-size="18" textLength="25" lengthAdjust="spacingAndGlyphs">EAT</text>
        <text class="r" x="418" y="295" font-size="18" textLength="45" lengthAdjust="spacingAndGlyphs">TOTAL</text>
        <text class="m" x="50" y="795" font-size="18" textLength="45" lengthAdjust="spacingAndGlyphs">CHANGE</text>
        <text class="m" x="50" y="655" font-size="18" textLength="45" lengthAdjust="spacingAndGlyphs">MATTER</text>
        <text class="y" x="1290" y="275" font-size="18" textLength="28" lengthAdjust="spacingAndGlyphs">RUN</text>
        <text class="r" x="1298" y="248" font-size="18" textLength="25" lengthAdjust="spacingAndGlyphs">BED</text>
        <text class="m" x="1180" y="368" font-size="18" textLength="38" lengthAdjust="spacingAndGlyphs">LEARN</text>
        <text class="r" x="1368" y="415" font-size="18" textLength="25" lengthAdjust="spacingAndGlyphs">RED</text>
        <text class="g" x="1370" y="435" font-size="18" textLength="30" lengthAdjust="spacingAndGlyphs">MIND</text>
        <text class="y" x="725" y="593" font-size="18" textLength="28" lengthAdjust="spacingAndGlyphs">FAST</text>
        <text class="y" x="760" y="618" font-size="18" textLength="28" lengthAdjust="spacingAndGlyphs">HATE</text>
        <text class="m" x="1055" y="585" font-size="18" textLength="45" lengthAdjust="spacingAndGlyphs">DON'T</text>
        <text class="y" x="310" y="612" font-size="18" textLength="22" lengthAdjust="spacingAndGlyphs">YES</text>
        <text class="y" x="815" y="685" font-size="18" textLength="70" lengthAdjust="spacingAndGlyphs">SITUATION</text>
        <text class="g" x="885" y="688" font-size="18" textLength="30" lengthAdjust="spacingAndGlyphs">RADIO</text>
        <text class="n" x="985" y="688" font-size="18" textLength="100" lengthAdjust="spacingAndGlyphs">LIVE COMPANY</text>
        <text class="y" x="1122" y="688" font-size="18" textLength="128" lengthAdjust="spacingAndGlyphs">INSTEAD RELATIONSHIP</text>
        <text class="r" x="1300" y="688" font-size="18" textLength="80" lengthAdjust="spacingAndGlyphs">EXPERIENCE</text>
        <text class="m" x="1385" y="688" font-size="18" textLength="35" lengthAdjust="spacingAndGlyphs">UPSET</text>
        <text class="g" x="858" y="745" font-size="18" textLength="32" lengthAdjust="spacingAndGlyphs">BRING</text>
        <text class="g" x="925" y="778" font-size="18" textLength="25" lengthAdjust="spacingAndGlyphs">PLAN</text>
        <text class="r" x="858" y="790" font-size="18" textLength="30" lengthAdjust="spacingAndGlyphs">BUSY</text>
        <text class="n" x="750" y="878" font-size="18" textLength="32" lengthAdjust="spacingAndGlyphs">BREAK</text>
        <text class="n" x="450" y="285" transform="rotate(-90 450 285)" font-size="48" textLength="100" lengthAdjust="spacingAndGlyphs">POINT</text>
        <text class="m" x="118" y="200" transform="rotate(-90 118 200)" font-size="25" textLength="50" lengthAdjust="spacingAndGlyphs">THINK</text>
        <text class="y t3" x="315" y="342" transform="rotate(-90 315 342)" font-size="78" textLength="110" lengthAdjust="spacingAndGlyphs">DATE</text>
        <text class="n t3" x="332" y="565" transform="rotate(-90 332 565)" font-size="102" textLength="150" lengthAdjust="spacingAndGlyphs">TALK</text>
        <text class="g" x="358" y="540" transform="rotate(-90 358 540)" font-size="38" textLength="80" lengthAdjust="spacingAndGlyphs">SINGLE</text>
        <text class="g" x="735" y="345" transform="rotate(-90 735 345)" font-size="37" textLength="107" lengthAdjust="spacingAndGlyphs">PROBLEM</text>
        <text class="y" x="848" y="390" transform="rotate(-90 848 390)" font-size="41" textLength="115" lengthAdjust="spacingAndGlyphs">RECENTLY</text>
        <text class="n" x="727" y="460" transform="rotate(-90 727 460)" font-size="51" textLength="95" lengthAdjust="spacingAndGlyphs">HOME</text>
        <text class="m t3" x="722" y="585" transform="rotate(-90 722 585)" font-size="68" textLength="105" lengthAdjust="spacingAndGlyphs">LOOK</text>
        <text class="r" x="968" y="398" transform="rotate(-90 968 398)" font-size="41" textLength="93" lengthAdjust="spacingAndGlyphs">CHANGE</text>
        <text class="r t3" x="1205" y="518" transform="rotate(-90 1205 518)" font-size="55" textLength="133" lengthAdjust="spacingAndGlyphs">HAPPEN</text>
        <text class="y" x="1198" y="345" transform="rotate(-90 1198 345)" font-size="41" textLength="80" lengthAdjust="spacingAndGlyphs">MARRY</text>
        <text class="y t3" x="1480" y="530" transform="rotate(-90 1480 530)" font-size="96" textLength="110" lengthAdjust="spacingAndGlyphs">TRY</text>
        <text class="g" x="1510" y="500" transform="rotate(-90 1510 500)" font-size="38" textLength="90" lengthAdjust="spacingAndGlyphs">SCHOOL</text>
        <text class="n t3" x="1490" y="640" transform="rotate(-90 1490 640)" font-size="79" textLength="105" lengthAdjust="spacingAndGlyphs">LOVE</text>
        <text class="n" x="845" y="495" transform="rotate(-90 845 495)" font-size="41" textLength="60" lengthAdjust="spacingAndGlyphs">QUITE</text>
        <text class="m" x="965" y="565" transform="rotate(-90 965 565)" font-size="41" textLength="105" lengthAdjust="spacingAndGlyphs">HUSBAND</text>
        <text class="g" x="968" y="680" transform="rotate(-90 968 680)" font-size="52" textLength="97" lengthAdjust="spacingAndGlyphs">CHILD</text>
        <text class="m t3" x="82" y="785" transform="rotate(-90 82 785)" font-size="71" textLength="117" lengthAdjust="spacingAndGlyphs">MEET</text>
        <text class="n" x="1510" y="885" transform="rotate(-90 1510 885)" font-size="27" textLength="100" lengthAdjust="spacingAndGlyphs">BOYFRIEND</text>
        <text class="m" x="1185" y="660" transform="rotate(-90 1185 660)" font-size="27" textLength="35" lengthAdjust="spacingAndGlyphs">NICE</text>
        <text class="m" x="790" y="690" transform="rotate(-90 790 690)" font-size="25" textLength="55" lengthAdjust="spacingAndGlyphs">MAYBE</text>
        <text class="r" x="45" y="300" transform="rotate(-90 45 300)" font-size="21" textLength="88" lengthAdjust="spacingAndGlyphs">CONVERSATION</text>
        <text class="g" x="42" y="355" transform="rotate(-90 42 355)" font-size="18" textLength="40" lengthAdjust="spacingAndGlyphs">ANGRY</text>
        <text class="r" x="595" y="345" transform="rotate(-90 595 345)" font-size="21" textLength="70" lengthAdjust="spacingAndGlyphs">QUESTION</text>
        <text class="y" x="465" y="270" transform="rotate(-90 465 270)" font-size="21" textLength="60" lengthAdjust="spacingAndGlyphs">NORMAL</text>
        <text class="r" x="622" y="255" transform="rotate(-90 622 255)" font-size="21" textLength="45" lengthAdjust="spacingAndGlyphs">STRESS</text>
        <text class="m" x="330" y="330" transform="rotate(-90 330 330)" font-size="18" textLength="58" lengthAdjust="spacingAndGlyphs">RESPECT</text>
        <text class="g" x="345" y="415" transform="rotate(-90 345 415)" font-size="18" textLength="45" lengthAdjust="spacingAndGlyphs">ALWAYS</text>
        <text class="m" x="440" y="348" transform="rotate(-90 440 348)" font-size="18" textLength="40" lengthAdjust="spacingAndGlyphs">S DO!T</text>
        <text class="g" x="1082" y="350" transform="rotate(-90 1082 350)" font-size="21" textLength="65" lengthAdjust="spacingAndGlyphs">REASON</text>
        <text class="r" x="735" y="515" transform="rotate(-90 735 515)" font-size="18" textLength="60" lengthAdjust="spacingAndGlyphs">MESSAGE</text>
        <text class="g" x="740" y="560" transform="rotate(-90 740 560)" font-size="18" textLength="30" lengthAdjust="spacingAndGlyphs">EVEN</text>
        <text class="n" x="520" y="540" transform="rotate(-90 520 540)" font-size="18" textLength="35" lengthAdjust="spacingAndGlyphs">CLEAN</text>
        <text class="r" x="1075" y="565" transform="rotate(-90 1075 565)" font-size="27" textLength="55" lengthAdjust="spacingAndGlyphs">BRING</text>
        <text class="y" x="1210" y="580" transform="rotate(-90 1210 580)" font-size="21" textLength="55" lengthAdjust="spacingAndGlyphs">SMILE</text>
        <text class="n" x="1315" y="595" transform="rotate(-90 1315 595)" font-size="21" textLength="52" lengthAdjust="spacingAndGlyphs">HOUSE</text>
        <text class="m" x="1075" y="795" transform="rotate(-90 1075 795)" font-size="21" textLength="75" lengthAdjust="spacingAndGlyphs">HONESTLY</text>
        <text class="g" x="392" y="795" transform="rotate(-90 392 795)" font-size="18" textLength="75" lengthAdjust="spacingAndGlyphs">PROBABLY</text>
        <text class="g" x="392" y="690" transform="rotate(-90 392 690)" font-size="18" textLength="55" lengthAdjust="spacingAndGlyphs">DIFFERENT</text>
        <text class="r" x="322" y="750" transform="rotate(-90 322 750)" font-size="21" textLength="55" lengthAdjust="spacingAndGlyphs">PARENTS</text>
        <text class="r" x="635" y="785" transform="rotate(-90 635 785)" font-size="21" textLength="75" lengthAdjust="spacingAndGlyphs">WONDERING</text>
        <text class="m" x="635" y="665" transform="rotate(-90 635 665)" font-size="18" textLength="52" lengthAdjust="spacingAndGlyphs">ACCEPT</text>
        <text class="n" x="700" y="745" transform="rotate(-90 700 745)" font-size="18" textLength="65" lengthAdjust="spacingAndGlyphs">DEFINITELY</text>
        <text class="g" x="945" y="745" transform="rotate(-90 945 745)" font-size="21" textLength="52" lengthAdjust="spacingAndGlyphs">CLOSE</text>
        <text class="g" x="320" y="885" transform="rotate(-90 320 885)" font-size="21" textLength="55" lengthAdjust="spacingAndGlyphs">CONTINUE</text>
        <text class="m" x="530" y="868" transform="rotate(-90 530 868)" font-size="21" textLength="45" lengthAdjust="spacingAndGlyphs">MIND</text>
        <text class="g" x="1500" y="620" transform="rotate(-90 1500 620)" font-size="18" textLength="50" lengthAdjust="spacingAndGlyphs">MOTHER</text>
      </svg>
    </section>
  </div>
</main>
</div>
</body>
</html>
```
FILE: styles.css
```css
* { box-sizing: border-box; }
html, body { margin: 0; height: 100%; overflow: hidden; background: #fff; }
body { font-family: "Noto Sans", "Open Sans", sans-serif; color: #212529; font-size: 16px; line-height: 24px; }
.app { display: flex; height: 711px; }
.sidebar { width: 261px; flex: none; background: #343a40; padding: 32px 24px 0 18px; color: #f8f9fa; }
.brand { display: flex; gap: 20px; padding-bottom: 20px; height: 72px; border-bottom: 1px solid #fff; }
.logo { width: 50px; height: 50px; flex: none; }
.brand-name { font-size: 19px; line-height: 30px; margin-top: -4px; width: 130px; letter-spacing: -0.2px; }
.side-nav { display: flex; flex-direction: column; padding-top: 24px; }
.side-link { display: flex; align-items: center; height: 40px; font-size: 15px; letter-spacing: -0.15px; }
.ico { width: 17px; height: 16px; fill: #fff; margin-right: 15px; flex: none; }
.ico-home { width: 19px; }
.ico-pie { width: 18px; }
.main { flex: 1; min-width: 0; padding: 0 36px 0 50px; }
.title { margin: 15px 0 0; font-size: 39px; line-height: 48px; font-weight: 500; letter-spacing: -0.8px; padding-bottom: 14px; border-bottom: 2px solid #ccc; }
.columns { display: flex; padding-top: 16px; }
.pills { width: 287px; flex: none; display: flex; flex-direction: column; }
.pill { display: block; padding: 8px 16px; color: #4b63f6; border-radius: 4px; font-size: 15px; }
.pill.active { background: #3a72fb; color: #fff; }
.clouds { margin-left: 30px; width: 500px; }
.cloud-title { margin: 0 0 6px; font-size: 28px; line-height: 34px; font-weight: 500; letter-spacing: -0.3px; }
.cloud-title.next { margin: 22px 0 4px; }
.cloud { display: block; width: 500px; height: 250px; font-family: "Liberation Sans", sans-serif; font-weight: 700; filter: blur(0.35px); }
.cloud text { stroke-width: 1.2; }
.cloud .t1 { stroke-width: 14; }
.cloud .t2 { stroke-width: 6; }
.cloud .t3 { stroke-width: 2.5; }
.y { fill: #ecab29; stroke: #ecab29; }
.g { fill: #489371; stroke: #489371; }
.r { fill: #ca3b37; stroke: #ca3b37; }
.m { fill: #391114; stroke: #391114; }
.n { fill: #0f3150; stroke: #0f3150; }
```
